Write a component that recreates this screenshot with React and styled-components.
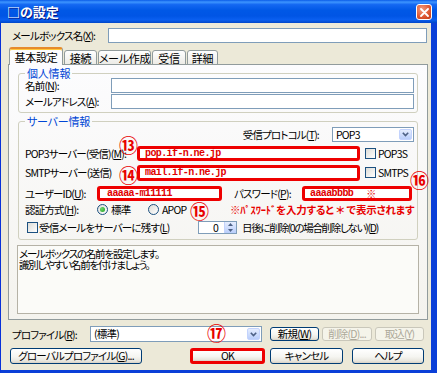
import React from "react";
import styled, { createGlobalStyle } from "styled-components";

const UI = `"Noto Sans CJK JP", "Liberation Sans", sans-serif`;

const Global = createGlobalStyle`
  html, body { margin: 0; padding: 0; background: #fff; }
  * { box-sizing: border-box; }
`;

const Window = styled.div`
  width: 437px;
  height: 373px;
  display: flex;
  flex-direction: column;
  overflow: hidden;
  font-family: ${UI};
  font-size: 10.5px;
  letter-spacing: -0.8px;
  font-feature-settings: "palt";
  color: #000;
`;

const TitleBar = styled.div`
  height: 23px;
  flex: none;
  display: flex;
  align-items: center;
  justify-content: space-between;
  padding: 1px 5px 0 7px;
  background: linear-gradient(180deg, #0A5CE8 0%, #3D95FF 9%, #1468F2 20%, #0058E6 45%, #0055E5 70%, #0A5FF0 86%, #0046C8 100%);
`;

const Title = styled.span`
  color: #fff;
  font-size: 13px;
  font-weight: 700;
  line-height: 14px;
  letter-spacing: 0;
  text-shadow: 1px 1px 0 #0A1883;
`;

const CloseBtn = styled.div`
  width: 16px;
  height: 16px;
  border: 1px solid #fff;
  border-radius: 3px;
  background: radial-gradient(circle at 35% 30%, #F39A7C, #DC5530 60%, #C03A16);
  display: flex;
  align-items: center;
  justify-content: center;
`;

const Frame = styled.div`
  flex: 1;
  display: flex;
  flex-direction: column;
  background: #ECE9D8;
  border-left: 1px solid #0831D9;
  border-right: 6px solid #0A3FD8;
  border-bottom: 3px solid #0A3FD8;
  padding: 5px 3px 6px 7px;
`;

const Row = styled.div`
  position: relative;
  display: flex;
  align-items: center;
  flex: none;
  height: ${(p) => p.$h || 15}px;
  margin-top: ${(p) => p.$mt || 0}px;
  padding-left: ${(p) => p.$pl || 0}px;
  justify-content: ${(p) => (p.$end ? "flex-end" : "flex-start")};
`;

const Label = styled.span`
  flex: none;
  width: ${(p) => (p.$w ? `${p.$w}px` : "auto")};
  margin-left: ${(p) => p.$ml || 0}px;
  letter-spacing: ${(p) => (p.$ls != null ? `${p.$ls}px` : "inherit")};
  white-space: nowrap;
  line-height: 13px;
`;

const TextBox = styled.div`
  flex: ${(p) => (p.$w ? "none" : "1")};
  width: ${(p) => (p.$w ? `${p.$w}px` : "auto")};
  height: 15px;
  margin-right: ${(p) => p.$mr || 0}px;
  background: #fff;
  border: 1px solid #7F9DB9;
`;

const RedBox = styled.div`
  flex: none;
  width: ${(p) => p.$w}px;
  height: ${(p) => p.$h || 15}px;
  background: #fff;
  border: 3px solid #EE0000;
  border-radius: 3px;
  display: flex;
  align-items: center;
  padding-left: ${(p) => p.$pl || 4}px;
  color: #E00000;
  font-family: "Liberation Mono", monospace;
  font-weight: 700;
  font-size: 10px;
  letter-spacing: -0.6px;
  white-space: nowrap;
`;

const Kome = styled.span`
  margin-left: 13px;
  font-family: ${UI};
  letter-spacing: 0;
`;

const TabStrip = styled.div`
  position: relative;
  z-index: 1;
  display: flex;
  align-items: flex-end;
  gap: 1px;
  height: 18px;
  margin-top: 4px;
  padding-left: 1px;
  flex: none;
`;

const Tab = styled.div`
  width: ${(p) => p.$w}px;
  height: ${(p) => (p.$active ? 18 : 15)}px;
  border: 1px solid #919B9C;
  border-bottom: ${(p) => (p.$active ? "none" : "1px solid #919B9C")};
  border-top: ${(p) => (p.$active ? "2px solid #E68B2C" : "1px solid #919B9C")};
  border-radius: 3px 3px 0 0;
  background: ${(p) => (p.$active ? "#FCFCFE" : "linear-gradient(#FFFFFF, #ECEBE6)")};
  box-shadow: ${(p) => (p.$active ? "inset 0 1px 0 #FFC73C" : "none")};
  display: flex;
  align-items: center;
  justify-content: center;
  font-size: 11px;
  letter-spacing: -0.3px;
  line-height: 12px;
  white-space: nowrap;
  padding-bottom: ${(p) => (p.$active ? 1 : 0)}px;
`;

const Panel = styled.div`
  height: 256px;
  flex: none;
  margin-top: -1px;
  border: 1px solid #919B9C;
  background: linear-gradient(#FCFCFE, #F4F3EE);
  padding: 0 8px 5px 8px;
  display: flex;
  flex-direction: column;
`;

const Group = styled.fieldset`
  margin: ${(p) => p.$mt}px 1px 0 1px;
  padding: 0 3px ${(p) => p.$pb}px 6px;
  border: 1px solid #D0D0BF;
  border-radius: 3px;
  min-width: 0;
  flex: none;
`;

const Legend = styled.legend`
  padding: 0 2px;
  line-height: 10px;
  color: #0046D5;
  font-size: 11px;
  letter-spacing: -0.2px;
`;

const Combo = styled.div`
  flex: none;
  width: ${(p) => p.$w}px;
  height: ${(p) => p.$h}px;
  margin-left: ${(p) => p.$ml || 0}px;
  border: 1px solid #7F9DB9;
  background: #fff;
  display: flex;
  align-items: center;
  justify-content: space-between;
  padding: 1px 1px 1px 3px;
  line-height: 12px;
`;

const ComboBtn = styled.div`
  width: 13px;
  height: 100%;
  border: 1px solid #C3D3FD;
  border-radius: 2px;
  background: linear-gradient(#E5EDFE, #B9CEFB);
  display: flex;
  align-items: center;
  justify-content: center;
`;

const Check = styled.span`
  flex: none;
  width: 11px;
  height: 11px;
  margin-left: ${(p) => p.$ml || 0}px;
  border: 1px solid #1C5180;
  background: linear-gradient(135deg, #DCDCD7, #FFFFFF);
`;

const Radio = styled.span`
  flex: none;
  width: 11px;
  height: 11px;
  border: 1px solid #1C5180;
  border-radius: 50%;
  background: linear-gradient(135deg, #DCDCD7, #FFFFFF);
  display: flex;
  align-items: center;
  justify-content: center;
  &::after {
    content: "";
    display: ${(p) => (p.$on ? "block" : "none")};
    width: 5px;
    height: 5px;
    border-radius: 50%;
    background: radial-gradient(circle at 35% 35%, #6BD46B, #21A121);
  }
`;

const RadioItem = styled.span`
  flex: none;
  width: ${(p) => p.$w}px;
  display: flex;
  align-items: center;
  gap: 3px;
  line-height: 12px;
`;

const Note = styled.span`
  color: #E80000;
  font-weight: 700;
  font-size: 10.5px;
  letter-spacing: -0.2px;
  line-height: 12px;
  white-space: pre;
`;

const Spin = styled.div`
  flex: none;
  width: 39px;
  height: 13px;
  border: 1px solid #7F9DB9;
  background: #fff;
  display: flex;
  align-items: center;
  justify-content: flex-end;
  line-height: 11px;
`;

const SpinVal = styled.span`
  margin-right: 6px;
`;

const SpinBtns = styled.div`
  width: 12px;
  height: 100%;
  display: flex;
  flex-direction: column;
  border-left: 1px solid #C3D3FD;
  background: linear-gradient(#E5EDFE, #B9CEFB);
  align-items: center;
  justify-content: space-around;
`;

const Desc = styled.div`
  flex: 1;
  margin-top: 5px;
  border: 1px solid #B5B2A6;
  background: #FBFBF8;
  padding: 2px 0 0 1px;
  line-height: 11px;
  letter-spacing: -1.2px;
  white-space: nowrap;
`;

const Btn = styled.button`
  flex: none;
  width: ${(p) => p.$w}px;
  height: ${(p) => p.$h || 16}px;
  margin: 0 0 0 ${(p) => p.$ml || 0}px;
  padding: 0;
  font: inherit;
  letter-spacing: inherit;
  font-feature-settings: "palt";
  line-height: 12px;
  border: ${(p) => (p.$red ? "3px solid #EE0000" : p.$disabled ? "1px solid #C9C7BA" : "1px solid #003C74")};
  border-radius: 3px;
  background: ${(p) => (p.$disabled ? "#F5F4EA" : "linear-gradient(#FFFFFF, #F5F5F1 55%, #E8E6DE 85%, #D6D0C5)")};
  color: ${(p) => (p.$disabled ? "#ACA899" : "#000")};
  display: flex;
  align-items: center;
  justify-content: center;
  white-space: nowrap;
`;

const Marker = styled.span`
  position: absolute;
  left: ${(p) => p.$x}px;
  top: ${(p) => p.$y}px;
  font-family: "Noto Sans CJK JP", sans-serif;
  font-feature-settings: normal;
  letter-spacing: 0;
  font-size: 19px;
  line-height: 19px;
  font-weight: 700;
  color: #E80000;
  white-space: nowrap;
  pointer-events: none;
`;

const Chevron = () => (
  <svg width="7" height="5" viewBox="0 0 7 5">
    <path d="M0.8 0.8 L3.5 3.6 L6.2 0.8" fill="none" stroke="#4D6185" strokeWidth="1.6" />
  </svg>
);

const Tri = ({ up }) => (
  <svg width="5" height="3" viewBox="0 0 5 3">
    <path d={up ? "M0 3 L2.5 0 L5 3 Z" : "M0 0 L2.5 3 L5 0 Z"} fill="#4D6185" />
  </svg>
);

export default function App() {
  return (
    <>
      <Global />
      <Window>
        <TitleBar>
          <Title>□の設定</Title>
          <CloseBtn>
            <svg width="9" height="9" viewBox="0 0 9 9">
              <path d="M1 1 L8 8 M8 1 L1 8" stroke="#fff" strokeWidth="1.8" strokeLinecap="round" />
            </svg>
          </CloseBtn>
        </TitleBar>
        <Frame>
          <Row $pl={4}>
            <Label $w={96}>メールボックス名(<u>X</u>):</Label>
            <TextBox $mr={1} />
          </Row>

          <TabStrip>
            <Tab $w={54} $active>基本設定</Tab>
            <Tab $w={33}>接続</Tab>
            <Tab $w={53}>メール作成</Tab>
            <Tab $w={34}>受信</Tab>
            <Tab $w={31}>詳細</Tab>
          </TabStrip>

          <Panel>
            <Group $mt={3} $pb={3}>
              <Legend>個人情報</Legend>
              <Row>
                <Label $w={86}>名前(<u>N</u>):</Label>
                <TextBox />
              </Row>
              <Row $mt={1}>
                <Label $w={86}>メールアドレス(<u>A</u>):</Label>
                <TextBox />
              </Row>
            </Group>

            <Group $mt={3} $pb={5}>
              <Legend>サーバー情報</Legend>
              <Row $mt={1} $end>
                <Label>受信プロトコル(<u>T</u>):</Label>
                <Combo $w={82} $h={15} $ml={13}>
                  <span>POP3</span>
                  <ComboBtn>
                    <Chevron />
                  </ComboBtn>
                </Combo>
              </Row>
              <Row $mt={4}>
                <Label $w={112}>POP3サーバー(受信)(<u>M</u>):</Label>
                <RedBox $w={223} $pl={5}>pop.if-n.ne.jp</RedBox>
                <Check $ml={5} />
                <Label $ml={2}>POP3S</Label>
                <Marker $x={94} $y={-11}>⑬</Marker>
              </Row>
              <Row $mt={4}>
                <Label $w={112}>SMTPサーバー(送信)</Label>
                <RedBox $w={223} $pl={5} $h={16}>mail.if-n.ne.jp</RedBox>
                <Check $ml={5} />
                <Label $ml={2}>SMTPS</Label>
                <Marker $x={94} $y={0}>⑭</Marker>
                <Marker $x={385} $y={5}>⑯</Marker>
              </Row>
              <Row $mt={6}>
                <Label $w={72}>ユーザーID(<u>U</u>):</Label>
                <RedBox $w={125} $pl={7}>aaaaa-m11111</RedBox>
                <Label $w={68} $ml={12}>パスワード(<u>P</u>):</Label>
                <RedBox $w={110} $pl={5}>
                  aaaabbbb<Kome>※</Kome>
                </RedBox>
              </Row>
              <Row $mt={2} $h={13}>
                <Label $w={72}>認証方式(<u>H</u>):</Label>
                <RadioItem $w={51}>
                  <Radio $on />
                  <span>標準</span>
                </RadioItem>
                <RadioItem $w={82}>
                  <Radio />
                  <span>APOP</span>
                </RadioItem>
                <Note>※ﾊﾟｽﾜｰﾄﾞを入力すると ＊ で表示されます</Note>
                <Marker $x={165} $y={-2}>⑮</Marker>
              </Row>
              <Row $mt={5} $h={13}>
                <Check $ml={2} />
                <Label $w={159} $ml={1}>受信メールをサーバーに残す(<u>L</u>)</Label>
                <Spin>
                  <SpinVal>0</SpinVal>
                  <SpinBtns>
                    <Tri up />
                    <Tri />
                  </SpinBtns>
                </Spin>
                <Label $ml={5} $ls={-1.3}>日後に削除(0の場合削除しない)(<u>D</u>)</Label>
              </Row>
            </Group>

            <Desc>
              メールボックスの名前を設定します。
              <br />
              識別しやすい名前を付けましょう。
            </Desc>
          </Panel>

          <Row $mt={6} $h={16} $pl={4}>
            <Label $w={78}>プロファイル(<u>R</u>):</Label>
            <Combo $w={172} $h={16}>
              <span>(標準)</span>
              <ComboBtn>
                <Chevron />
              </ComboBtn>
            </Combo>
            <Btn $w={49} $h={14} $ml={8}>新規(<u>W</u>)</Btn>
            <Btn $w={50} $h={14} $ml={3} $disabled>削除(<u>D</u>)...</Btn>
            <Btn $w={49} $h={14} $ml={3} $disabled>取込(<u>Y</u>)</Btn>
            <Marker $x={199} $y={-3}>⑰</Marker>
          </Row>

          <Row $mt={6} $h={16}>
            <Btn $w={132} $ml={2}>グローバルプロファイル(<u>G</u>)...</Btn>
            <Btn $w={75} $ml={48} $red>OK</Btn>
            <Btn $w={73} $ml={5}>キャンセル</Btn>
            <Btn $w={72} $ml={9}>ヘルプ</Btn>
          </Row>
        </Frame>
      </Window>
    </>
  );
}
